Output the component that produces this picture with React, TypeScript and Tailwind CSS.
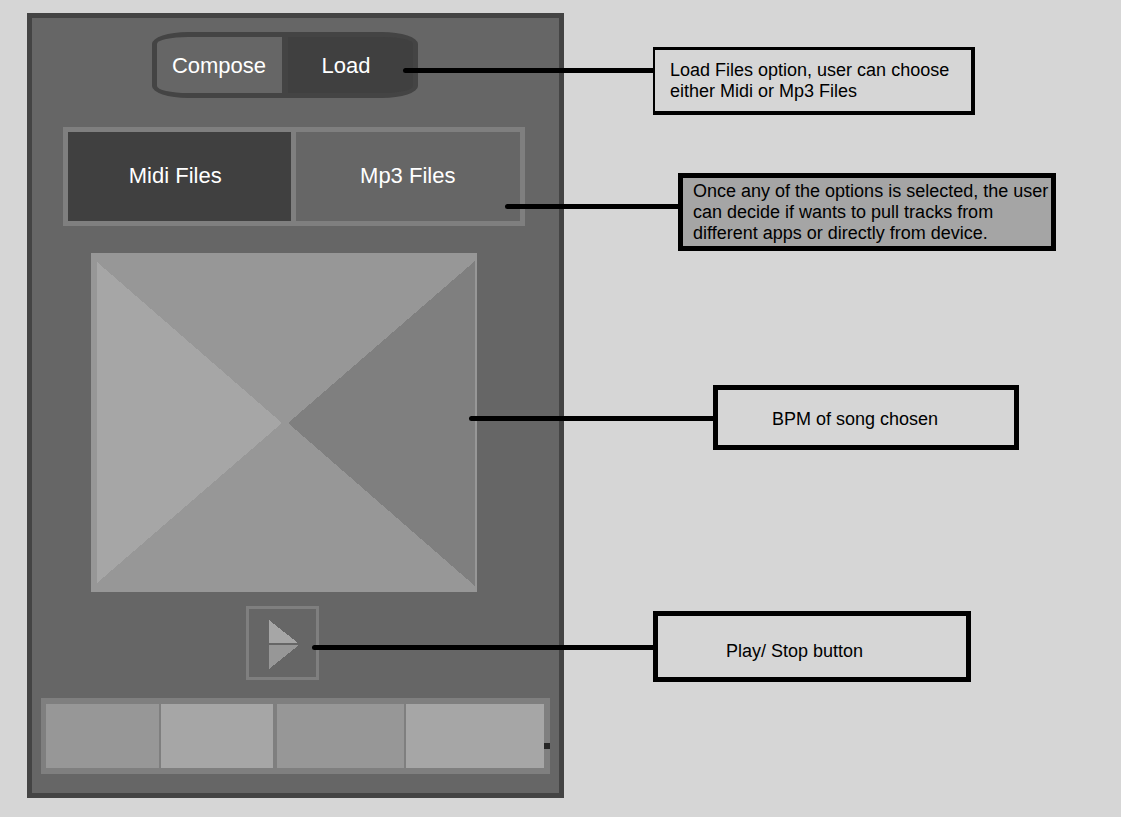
import type { ReactNode } from "react";

type NoteProps = {
  children: ReactNode;
  box: string;
  connector: string;
};

function Note({ children, box, connector }: NoteProps) {
  return (
    <li className={`relative border-black text-lg leading-[21px] text-black ${box}`}>
      <span
        aria-hidden="true"
        className={`absolute right-full h-[5px] rounded-l-full bg-black ${connector}`}
      />
      <p>{children}</p>
    </li>
  );
}

function ModeToggle() {
  return (
    <div className="grid w-full max-w-[266px] grid-cols-2 gap-[6px] overflow-hidden rounded-[36px/12px] border-[5px] border-[#444444] bg-[#444444] text-[22px] leading-7 text-white">
      <button type="button" className="h-14 bg-[#666666] pt-0.5">
        Compose
      </button>
      <button type="button" aria-pressed="true" className="h-14 bg-[#404040] pt-0.5 pr-2">
        Load
      </button>
    </div>
  );
}

function SourceTabs() {
  return (
    <div className="grid w-full max-w-[462px] grid-cols-2 gap-[5px] border-[5px] border-[#7f7f7f] bg-[#7f7f7f] text-[22px] leading-7 text-white">
      <button type="button" aria-pressed="true" className="h-[89px] bg-[#404040] pr-2 pb-0.5">
        Midi Files
      </button>
      <button type="button" className="h-[89px] bg-[#666666] pb-0.5">
        Mp3 Files
      </button>
    </div>
  );
}

function TempoPanel() {
  return (
    <svg
      viewBox="0 0 386 339"
      className="block w-full max-w-[386px]"
      shapeRendering="crispEdges"
      role="img"
      aria-label="BPM"
    >
      <rect width="386" height="339" fill="#979797" />
      <path d="M6 9 L191 170 L6 330 Z" fill="#a6a6a6" />
      <path d="M384 8 L197 170 L384 333 Z" fill="#7f7f7f" />
    </svg>
  );
}

function PlayButton() {
  return (
    <button
      type="button"
      aria-label="Play or stop"
      className="flex h-[74px] w-[73px] items-center justify-center border-[3px] border-[#7f7f7f] pt-1 pl-0.5"
    >
      <svg width="32" height="50" viewBox="0 0 32 50" shapeRendering="crispEdges" aria-hidden="true">
        <path d="M2 0 L31 23 H2 Z" fill="#a6a6a6" />
        <path d="M2 25 H32 L2 49 Z" fill="#979797" />
      </svg>
    </button>
  );
}

function BottomBar() {
  return (
    <nav
      aria-label="Sections"
      className="relative grid w-full max-w-[509px] grid-cols-[113fr_2fr_112fr_4fr_127fr_2fr_138fr] border-y-[6px] border-r-[6px] border-l-[5px] border-[#7f7f7f] bg-[#7f7f7f]"
    >
      <button type="button" aria-label="Section 1" className="h-16 bg-[#979797]" />
      <button type="button" aria-label="Section 2" className="col-start-3 h-16 bg-[#a6a6a6]" />
      <button type="button" aria-label="Section 3" className="col-start-5 h-16 bg-[#979797]" />
      <button type="button" aria-label="Section 4" className="col-start-7 h-16 bg-[#a6a6a6]" />
      <span aria-hidden="true" className="absolute top-[39px] left-full size-1.5 bg-[#262626]" />
    </nav>
  );
}

export default function App() {
  return (
    <main className="grid min-h-screen grid-cols-[minmax(0,537px)_minmax(0,1fr)] items-start bg-[#d6d6d6] py-[13px] pl-[27px] font-['Liberation_Sans',Arial,sans-serif]">
      <section className="flex flex-col items-center border-[5px] border-[#444444] bg-[#666666] pt-3.5 pb-[19px]">
        <div className="flex w-full justify-center pr-[22px]">
          <ModeToggle />
        </div>
        <div className="mt-[29px] flex w-full justify-center pr-1">
          <SourceTabs />
        </div>
        <div className="mt-[27px] flex w-full flex-col items-center gap-3.5 pr-6">
          <TempoPanel />
          <div className="pr-[3px]">
            <PlayButton />
          </div>
        </div>
        <div className="mt-[18px] flex w-full justify-center">
          <BottomBar />
        </div>
      </section>

      <ul className="pt-[34px]">
        <Note
          box="ml-[89px] max-w-[322px] border-t-[3px] border-r-4 border-b-4 border-l-2 pt-2.5 pr-2 pb-[9px] pl-[15px]"
          connector="top-[18px] w-[252px]"
        >
          Load Files option, user can choose either Midi or Mp3 Files
        </Note>
        <Note
          box="mt-[58px] ml-[114px] max-w-[378px] border-[5px] bg-[#a5a5a5] pt-[3px] pb-[2px] pl-2.5"
          connector="top-[26px] w-[178px]"
        >
          Once any of the options is selected, the user can decide if wants to pull tracks from different
          apps or directly from device.
        </Note>
        <Note
          box="mt-[134px] ml-[149px] max-w-[306px] border-[5px] pt-[19px] pb-[15px] pl-[54px]"
          connector="top-[26px] w-[249px]"
        >
          BPM of song chosen
        </Note>
        <Note
          box="mt-[161px] ml-[89px] max-w-[318px] border-[5px] pt-[25px] pb-[15px] pl-[68px]"
          connector="top-[29px] w-[346px]"
        >
          Play/ Stop button
        </Note>
      </ul>
    </main>
  );
}
